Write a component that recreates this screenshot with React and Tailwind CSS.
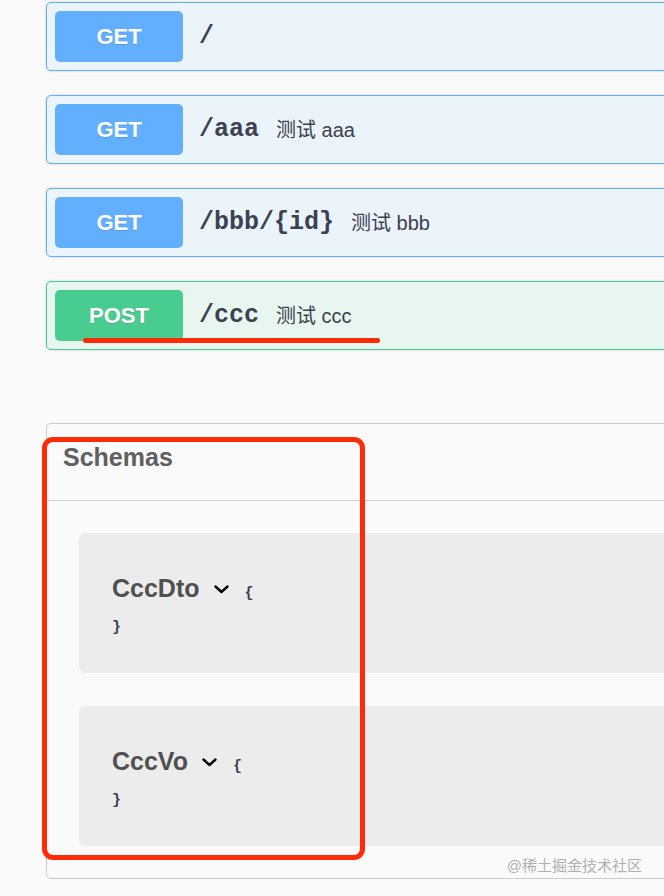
import React from "react";

const SANS = "font-['Liberation_Sans','Noto_Sans_CJK_SC',sans-serif]";

function Row({ method, path, desc }) {
  const isPost = method === "POST";
  return (
    <div
      className={`flex items-center h-[69px] w-[640px] p-[8px] border rounded-[5px] shadow-[0_0_3px_rgba(0,0,0,0.19)] ${
        isPost ? "bg-[#e8f6f0] border-[#49cc90]" : "bg-[#ebf3fb] border-[#61affe]"
      }`}
    >
      <div
        className={`flex items-center justify-center w-[128px] h-[51px] rounded-[5px] text-white font-bold text-[22px] [text-shadow:0_1px_0_rgba(0,0,0,0.12)] ${
          isPost ? "bg-[#49cc90]" : "bg-[#61affe]"
        }`}
      >
        {method}
      </div>
      <span className="pl-[16px] font-['Liberation_Mono',monospace] font-bold text-[25px] text-[#3b4151]">
        {path}
      </span>
      {desc && (
        <span className="ml-[17px] text-[20px] text-[#3b4151]">{desc}</span>
      )}
    </div>
  );
}

function Chevron() {
  return (
    <svg width="15" height="9" viewBox="0 0 15 9" className="ml-[14px] self-center mt-[2px]">
      <polyline points="1.5,1.5 7.5,7 13.5,1.5" fill="none" stroke="#000" strokeWidth="2.4" strokeLinecap="round" strokeLinejoin="round" />
    </svg>
  );
}

function Model({ name }) {
  return (
    <div className="w-[620px] h-[140px] rounded-[6px] bg-[#ececec] pl-[33px] pt-[40px]">
      <div className="flex items-baseline h-[30px] leading-[30px]">
        <span className="text-[25px] font-bold text-[#505050]">{name}</span>
        <Chevron />
        <span className="ml-[16px] font-['Liberation_Mono',monospace] font-bold text-[15px] text-[#3b4151]">
          {"{"}
        </span>
      </div>
      <div className="mt-[13px] h-[24px] leading-[24px] font-['Liberation_Mono',monospace] font-bold text-[15px] text-[#3b4151]">
        {"}"}
      </div>
    </div>
  );
}

export default function App() {
  return (
    <div className={`relative w-[664px] h-[896px] overflow-hidden bg-[#fafafa] ${SANS}`}>
      <div className="pl-[46px] pt-[2px] flex flex-col gap-[24px]">
        <Row method="GET" path="/" />
        <Row method="GET" path="/aaa" desc="测试 aaa" />
        <Row method="GET" path="/bbb/{id}" desc="测试 bbb" />
        <Row method="POST" path="/ccc" desc="测试 ccc" />
      </div>

      <div className="ml-[46px] mt-[73px] w-[660px] border border-[#cbcbcb] rounded-[5px] bg-[#fafafa]">
        <div className="h-[77px] border-b border-[#d0d0d0] pl-[16px] pt-[18px]">
          <span className="text-[25px] leading-[30px] font-bold text-[#606060]">Schemas</span>
        </div>
        <div className="pl-[32px] pt-[32px] pb-[32px] flex flex-col gap-[33px]">
          <Model name="CccDto" />
          <Model name="CccVo" />
        </div>
      </div>

      {/* annotations */}
      <div className="absolute left-[83px] top-[338px] w-[297px] h-[5px] rounded-full bg-[#ff2a06]" />
      <div className="absolute left-[42px] top-[437px] w-[323px] h-[423px] border-[5px] border-[#ff2a06] rounded-[11px]" />
      <div className="absolute right-[22px] top-[855px] text-[15px] text-[#b0b0b0]">@稀土掘金技术社区</div>
    </div>
  );
}
